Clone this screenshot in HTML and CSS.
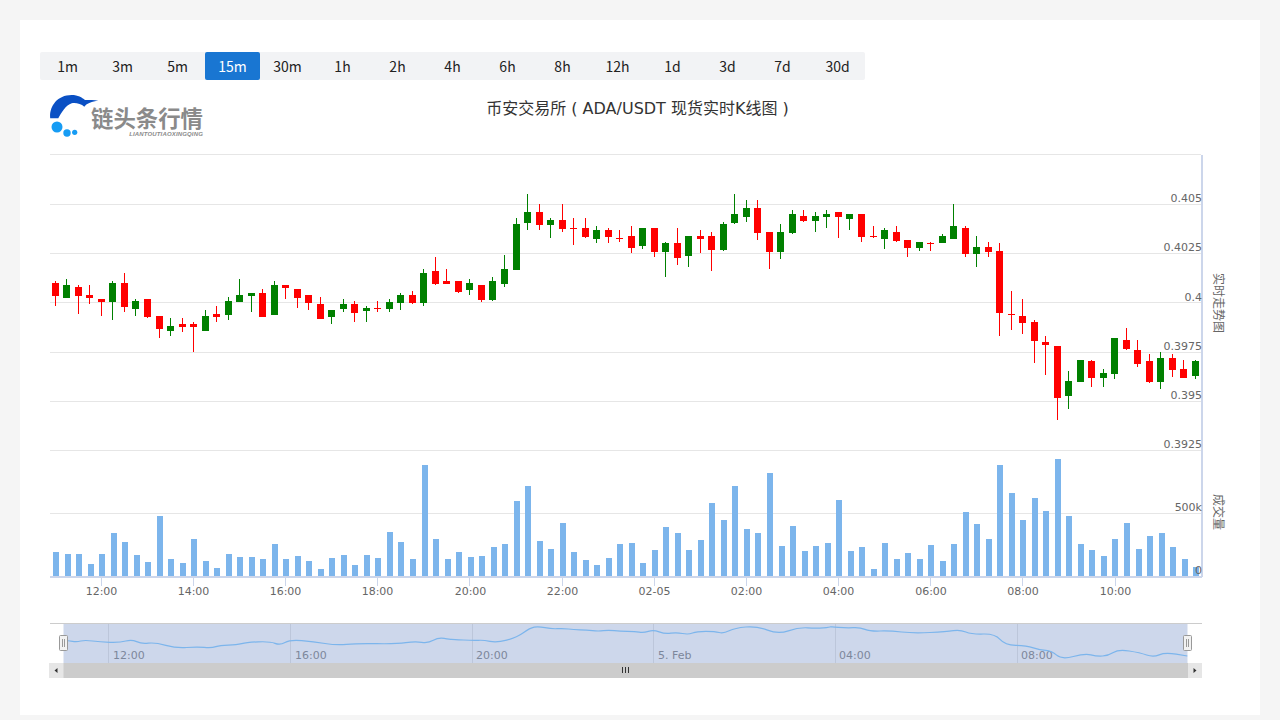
FILE: index.html
```html
<!DOCTYPE html>
<html lang="zh-CN">
<head>
<meta charset="utf-8">
<title>币安交易所 ADA/USDT 现货实时K线图</title>
<link rel="stylesheet" href="styles.css">
</head>
<body>
<main class="card">
  <nav class="tabs">
    <a class="tab">1m</a><a class="tab">3m</a><a class="tab">5m</a><a class="tab active">15m</a><a class="tab">30m</a><a class="tab">1h</a><a class="tab">2h</a><a class="tab">4h</a><a class="tab">6h</a><a class="tab">8h</a><a class="tab">12h</a><a class="tab">1d</a><a class="tab">3d</a><a class="tab">7d</a><a class="tab">30d</a>
  </nav>
  <header class="chart-head">
    <div class="logo">
      <svg class="logo-mark" viewBox="50 94 50 43" width="50" height="43" aria-hidden="true">
        <path class="logo-wave" d="M50.2 118.3C49 108 56 95 71.7 95C78 95 82 97.5 85 100C90 100 94 100 98.3 100.7C92 101.5 87 103 84.3 106.7C81 104 76 102.5 71.7 103.3C66 105 61 113 58.3 118.3Z"/>
        <circle class="logo-dot" cx="57" cy="127" r="5.5"/>
        <circle class="logo-dot" cx="67" cy="133" r="3.7"/>
        <circle class="logo-dot" cx="74.7" cy="132.3" r="2.6"/>
      </svg>
      <div class="logo-text">
        <span class="logo-name">链头条行情</span>
        <span class="logo-sub">LIANTOUTIAOXINGQING</span>
      </div>
    </div>
    <h1 class="title">币安交易所 ( ADA/USDT 现货实时K线图 )</h1>
  </header>
  <svg class="chart" viewBox="40 154 1200 540" width="1200" height="540" role="img">
    <g class="grid">
      <path d="M50 154.5H1201M50 204.5H1201M50 253.5H1201M50 302.5H1201M50 352.5H1201M50 401.5H1201M50 450.5H1201M50 513.5H1201"/>
    </g>
    <g id="volumes"></g>
    <g id="candles"></g>
    <g class="axis">
      <path d="M1202 155V577M50 576.5H1202"/>
      <path d="M101.5 577V586M193.5 577V586M285.5 577V586M377.5 577V586M469.5 577V586M562.5 577V586M654.5 577V586M746.5 577V586M838.5 577V586M930.5 577V586M1022.5 577V586M1115.5 577V586"/>
    </g>
    <g class="label y-label">
      <text x="1202" y="202">0.405</text>
      <text x="1202" y="251">0.4025</text>
      <text x="1202" y="301">0.4</text>
      <text x="1202" y="350">0.3975</text>
      <text x="1202" y="399">0.395</text>
      <text x="1202" y="448">0.3925</text>
      <text x="1202" y="511">500k</text>
      <text x="1202" y="574">0</text>
    </g>
    <g class="label x-label">
      <text x="101.5" y="595">12:00</text>
      <text x="193.5" y="595">14:00</text>
      <text x="285.5" y="595">16:00</text>
      <text x="377.5" y="595">18:00</text>
      <text x="470.5" y="595">20:00</text>
      <text x="562.5" y="595">22:00</text>
      <text x="654.5" y="595">02-05</text>
      <text x="746.5" y="595">02:00</text>
      <text x="838.5" y="595">04:00</text>
      <text x="931" y="595">06:00</text>
      <text x="1023" y="595">08:00</text>
      <text x="1115.5" y="595">10:00</text>
    </g>
    <text class="axis-title" transform="translate(1214 303) rotate(90)">实时走势图</text>
    <text class="axis-title" transform="translate(1214 512) rotate(90)">成交量</text>

    <g class="nav-grid">
      <path d="M108.5 624V663M290.5 624V663M472.5 624V663M653.5 624V663M835.5 624V663M1017.5 624V663"/>
    </g>
    <g class="label nav-label">
      <text x="113" y="659">12:00</text>
      <text x="295" y="659">16:00</text>
      <text x="476" y="659">20:00</text>
      <text x="658" y="659">5. Feb</text>
      <text x="839" y="659">04:00</text>
      <text x="1021" y="659">08:00</text>
    </g>
    <rect class="nav-mask" x="63.5" y="624" width="1124" height="39"/>
    <path class="nav-outline" d="M50 623.5H1202"/>
    <path id="nav-line" class="nav-line" d=""/>
    <rect class="nav-handle" x="59.5" y="635.5" width="8" height="15" rx="1"/>
    <path class="nav-handle-grip" d="M62.5 639V647M64.5 639V647"/>
    <rect class="nav-handle" x="1183.5" y="635.5" width="8" height="15" rx="1"/>
    <path class="nav-handle-grip" d="M1186.5 639V647M1188.5 639V647"/>

    <rect class="scroll-track" x="49" y="663" width="1153" height="15"/>
    <rect class="scroll-btn" x="49" y="663" width="14.5" height="15"/>
    <rect class="scroll-btn" x="1188" y="663" width="14" height="15"/>
    <path class="scroll-arrow" d="M57.5 668V673L54.5 670.5ZM1193.5 668V673L1196.5 670.5Z"/>
    <path class="scroll-grip" d="M622.5 667V673M625.5 667V673M628.5 667V673"/>
  </svg>
</main>
<script src="chart.js"></script>
</body>
</html>
```

FILE: styles.css
```css
* { box-sizing: border-box; }
html, body { margin: 0; height: 100%; }
body {
  background: #f5f5f5;
  font-family: "Noto Sans CJK SC", "Noto Sans", sans-serif;
  overflow: hidden;
}
.card {
  margin: 20px 20px 0;
  height: 695px;
  padding: 32px 20px 0;
  background: #fff;
}
.tabs {
  display: flex;
  width: 825px;
  height: 28px;
  background: #f2f3f5;
  border-radius: 2px;
}
.tab {
  flex: 0 0 55px;
  font-size: 14px;
  line-height: 28px;
  text-align: center;
  color: #222;
}
.tab.active {
  background: #1976d2;
  color: #fff;
  border-radius: 2px;
}
.chart-head {
  position: relative;
  height: 74px;
}
.logo {
  display: flex;
  align-items: flex-start;
  padding: 14px 0 0 10px;
}
.logo-mark { flex: none; }
.logo-wave { fill: #0a50c4; }
.logo-dot { fill: #169cf4; }
.logo-text {
  display: flex;
  flex-direction: column;
  align-items: flex-end;
  margin: 11px 0 0 -9px;
}
.logo-name {
  font-size: 22.4px;
  line-height: 25px;
  font-weight: 700;
  color: #8a8a8a;
  white-space: nowrap;
}
.logo-sub {
  font-family: "Liberation Sans", sans-serif;
  font-size: 6px;
  line-height: 6px;
  font-weight: 700;
  font-style: italic;
  letter-spacing: 0.15px;
  color: #8a8a8a;
  margin-top: 1px;
}
.title {
  position: absolute;
  top: 18px;
  left: 0;
  right: 5px;
  margin: 0;
  text-align: center;
  font-family: "DejaVu Sans", "Noto Sans CJK SC", sans-serif;
  font-size: 16px;
  line-height: 22px;
  font-weight: 400;
  color: #333;
}
.chart { display: block; }
.grid path { fill: none; stroke: #e6e6e6; stroke-width: 1; shape-rendering: crispEdges; }
.axis path { fill: none; stroke: #ccd6eb; stroke-width: 1; shape-rendering: crispEdges; }
.axis path:first-child { stroke-width: 2; }
.candle { shape-rendering: crispEdges; }
.candle.up { fill: #008000; }
.candle.down { fill: #ff0000; }
.volume { fill: #7cb5ec; shape-rendering: crispEdges; }
.label text { font-family: "DejaVu Sans", sans-serif; font-size: 11px; fill: #666; }
.y-label text { text-anchor: end; }
.x-label text { text-anchor: middle; }
.nav-label text { fill: #888; }
.axis-title {
  font-family: "Noto Sans CJK SC", sans-serif;
  font-size: 12px;
  fill: #666;
  text-anchor: middle;
}
.nav-grid path { fill: none; stroke: #e6e6e6; stroke-width: 1; shape-rendering: crispEdges; }
.nav-mask { fill: rgba(102, 133, 194, 0.33); }
.nav-outline { fill: none; stroke: #ccc; stroke-width: 1; shape-rendering: crispEdges; }
.nav-line { fill: none; stroke: #7cb5ec; stroke-width: 1.2; stroke-linejoin: round; }
.nav-handle { fill: #f2f2f2; stroke: #999; stroke-width: 1; }
.nav-handle-grip { fill: none; stroke: #999; stroke-width: 1; shape-rendering: crispEdges; }
.scroll-track { fill: #cccccc; }
.scroll-btn { fill: #e6e6e6; }
.scroll-arrow { fill: #333; }
.scroll-grip { fill: none; stroke: #333; stroke-width: 1; shape-rendering: crispEdges; }
```

FILE: chart.js
```js
// Each candle: wick top, body top, body bottom, wick bottom, up?  Values in 1/3 px from y=180.
var CANDLES = [
[303,309,348,378,0],[297,315,354,354,1],[315,321,348,402,0],[315,345,354,372,0],[357,357,366,408,0],
[303,309,366,420,1],[279,309,381,396,0],[357,363,387,408,1],[357,357,411,414,0],[408,408,447,474,0],
[414,438,453,468,1],[414,432,441,456,0],[426,432,441,516,0],[390,408,453,453,1],[378,402,411,426,0],
[351,363,405,420,1],[297,345,366,366,1],[339,339,348,396,1],[327,339,411,411,0],[303,315,405,405,1],
[315,315,324,357,0],[327,327,354,384,0],[345,345,369,390,0],[351,372,417,417,0],[390,390,411,432,1],
[357,372,387,396,1],[363,372,399,426,0],[378,384,393,426,1],[363,384,387,396,0],[357,366,387,396,1],
[339,345,369,390,1],[333,345,369,372,0],[267,279,369,378,1],[231,273,312,315,0],[267,303,312,312,0],
[303,303,336,339,0],[297,309,330,345,1],[315,315,360,366,0],[291,303,360,363,1],[225,267,312,321,1],
[114,132,270,270,1],[42,96,129,150,1],[72,96,135,150,0],[114,120,135,174,1],[72,120,147,156,0],
[114,144,147,195,0],[114,144,171,174,0],[138,150,177,189,1],[144,150,171,189,0],[150,174,177,186,0],
[138,168,204,219,0],[144,144,198,207,1],[144,144,216,231,0],[186,189,216,291,1],[144,189,234,255,0],
[168,168,228,261,1],[150,168,177,219,0],[156,168,210,273,0],[126,132,210,213,1],[42,102,129,132,1],
[60,84,111,126,1],[60,84,159,180,0],[156,156,216,267,0],[132,156,216,237,1],[90,102,159,162,1],
[90,108,123,126,0],[96,108,123,156,1],[90,102,111,144,1],[96,96,111,174,0],[102,102,117,150,1],
[102,102,171,186,0],[138,168,171,174,0],[144,150,177,207,1],[138,156,183,186,0],[180,180,204,231,0],
[186,186,204,213,1],[186,189,192,213,0],[162,168,189,189,1],[72,138,177,177,1],[138,144,222,231,0],
[168,201,222,261,1],[186,201,216,231,0],[189,213,399,468,0],[333,402,405,450,0],[357,408,429,462,0],
[420,426,483,549,0],[468,486,495,585,0],[498,498,654,720,0],[573,603,648,687,1],[540,540,606,606,1],
[540,543,594,621,0],[567,579,594,621,1],[474,474,582,597,1],[444,480,507,510,0],[480,510,552,561,0],
[522,543,606,609,0],[516,534,606,627,1],[522,534,570,591,0],[540,567,594,594,0],[540,543,588,597,1]
];
// Bar tops in 1/3 px from y=450; the baseline is y=576.
var VOLUMES = [
306,312,312,342,312,249,276,315,336,198,327,339,267,333,354,312,321,321,327,282,327,318,333,357,324,315,345,315,324,246,276,327,45,267,
327,306,321,318,291,282,153,108,273,297,219,306,330,345,324,282,279,339,300,231,249,300,270,159,210,108,237,249,69,288,228,303,288,279,150,
303,291,357,279,327,309,327,285,333,282,186,222,267,45,129,210,144,183,27,198,282,300,318,267,219,297,258,249,291,327,351
];
// Navigator line, in 1/3 px from the given origin.
var NAV = [
{x:40,y:610,p:[[71,90],[85,92],[110,96],[135,90],[180,96],[240,98],[275,88],[305,102],[345,97],[410,115],[470,110],[515,114],[540,106],[590,105],[620,97],[690,94],[720,106],[750,89],[820,95],[890,106],[950,100],[1070,102],[1125,94],[1165,100],[1195,82],[1230,88]]},
{x:440,y:610,p:[[40,88],[100,92],[130,90],[170,98],[230,83],[270,54],[295,49],[335,57],[370,55],[400,59],[440,60],[475,64],[505,60],[540,64],[585,64],[610,69],[640,59],[675,72],[710,67],[745,74],[770,64],[825,64],[850,71],[885,54],[950,48],[1015,73],[1075,52],[1130,55],[1170,52]]},
{x:830,y:610,p:[[0,50],[50,54],[90,52],[120,64],[180,62],[250,70],[350,65],[390,59],[425,73],[495,71],[525,105],[590,107],[630,120],[665,122],[695,149],[765,130],[800,139],[835,137],[865,118],[930,128],[970,142],[1005,127],[1072,138]]}
];
var SVG_NS = 'http://www.w3.org/2000/svg';
function rect(parent, cls, x, y, w, h) {
  var r = document.createElementNS(SVG_NS, 'rect');
  r.setAttribute('class', cls);
  r.setAttribute('x', x);
  r.setAttribute('y', y);
  r.setAttribute('width', w);
  r.setAttribute('height', h);
  parent.appendChild(r);
}
var candleGroup = document.getElementById('candles');
CANDLES.forEach(function (c, i) {
  var left = Math.round(51.87 + 11.516 * i);
  var cls = 'candle ' + (c[4] ? 'up' : 'down');
  rect(candleGroup, cls, left + 3, 180 + c[0] / 3, 1, (c[3] - c[0]) / 3);
  rect(candleGroup, cls, left, 180 + c[1] / 3, 7, (c[2] - c[1]) / 3);
});
var volumeGroup = document.getElementById('volumes');
VOLUMES.forEach(function (v, i) {
  var top = 450 + v / 3;
  rect(volumeGroup, 'volume', Math.round(53 + 11.516 * i), top, 6, 576 - top);
});
var pts = [];
NAV.forEach(function (seg) {
  seg.p.forEach(function (q) { pts.push([seg.x + q[0] / 3, seg.y + q[1] / 3]); });
});
var d = 'M' + pts[0][0] + ' ' + pts[0][1];
for (var i = 1; i < pts.length - 1; i++) {
  d += 'Q' + pts[i][0] + ' ' + pts[i][1] + ' ' + (pts[i][0] + pts[i + 1][0]) / 2 + ' ' + (pts[i][1] + pts[i + 1][1]) / 2;
}
d += 'L' + pts[pts.length - 1][0] + ' ' + pts[pts.length - 1][1];
document.getElementById('nav-line').setAttribute('d', d);
```
